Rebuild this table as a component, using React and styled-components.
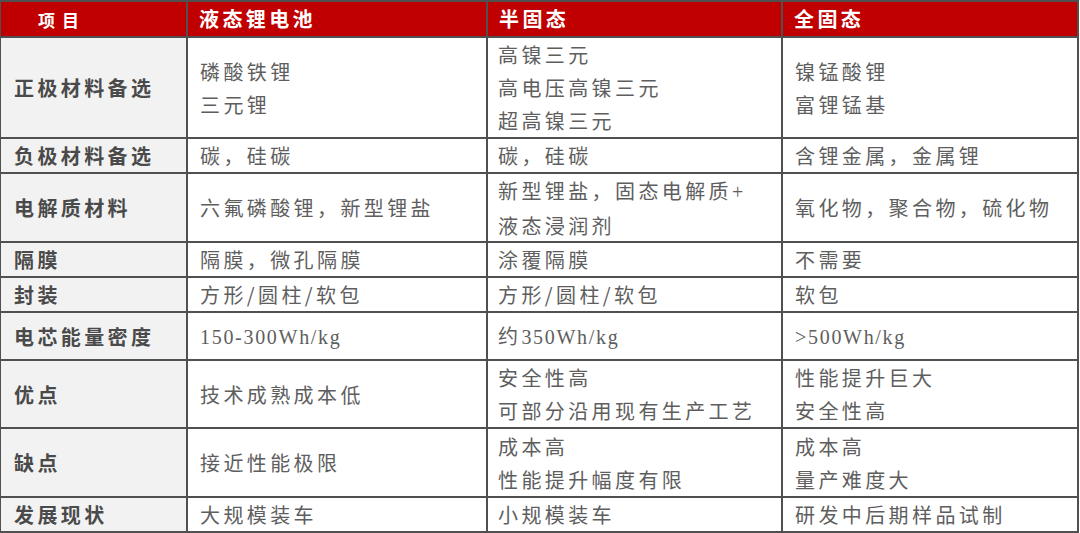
import React from "react";
import styled, { createGlobalStyle } from "styled-components";

const Global = createGlobalStyle`
  html, body { margin: 0; padding: 0; background: #ffffff; }
  body { font-family: "Noto Sans CJK SC", "Noto Sans", sans-serif; }
`;

const Table = styled.div`
  display: grid;
  grid-template-columns: 185px 298px 293px 294px;
  grid-template-rows: 34px 99px 33px 67px 33px 33px 46px 66px 67px 33px;
  gap: 2px;
  padding: 2px 2px 2px 1px;
  background: #505050;
  width: max-content;
`;

const HeadCell = styled.div`
  background: #c00000;
  color: #ffffff;
  display: flex;
  align-items: center;
  padding-left: ${(p) => (p.$first ? "37px" : "11px")};
  font-family: "Noto Sans CJK SC", sans-serif;
  font-weight: 700;
  font-size: ${(p) => (p.$first ? "17px" : "20px")};
  letter-spacing: ${(p) => (p.$first ? "7px" : "3.4px")};
  line-height: 1;
`;

const LabelCell = styled.div`
  background: #f2f2f2;
  color: #4a4a4a;
  display: flex;
  align-items: center;
  padding-left: 13px;
  font-family: "Noto Sans CJK SC", sans-serif;
  font-weight: 700;
  font-size: 20px;
  letter-spacing: 3.4px;
`;

const Cell = styled.div`
  background: #ffffff;
  color: #5e5e5e;
  display: flex;
  flex-direction: column;
  justify-content: center;
  padding-left: ${(p) => p.$pad}px;
  font-family: "Noto Sans CJK SC", sans-serif;
  font-weight: 400;
  font-size: 20px;
  letter-spacing: 3.4px;
`;

const Line = styled.div`
  line-height: 33px;
  white-space: nowrap;
`;

const Latin = styled.span`
  font-family: "Liberation Serif", serif;
  font-size: 20px;
  letter-spacing: 1.7px;
`;

const headers = ["项目", "液态锂电池", "半固态", "全固态"];

const rows = [
  ["正极材料备选", ["磷酸铁锂", "三元锂"], ["高镍三元", "高电压高镍三元", "超高镍三元"], ["镍锰酸锂", "富锂锰基"]],
  ["负极材料备选", ["碳，硅碳"], ["碳，硅碳"], ["含锂金属，金属锂"]],
  ["电解质材料", ["六氟磷酸锂，新型锂盐"], ["新型锂盐，固态电解质+", "液态浸润剂"], ["氧化物，聚合物，硫化物"]],
  ["隔膜", ["隔膜，微孔隔膜"], ["涂覆隔膜"], ["不需要"]],
  ["封装", ["方形/圆柱/软包"], ["方形/圆柱/软包"], ["软包"]],
  ["电芯能量密度", ["150-300Wh/kg"], ["约350Wh/kg"], [">500Wh/kg"]],
  ["优点", ["技术成熟成本低"], ["安全性高", "可部分沿用现有生产工艺"], ["性能提升巨大", "安全性高"]],
  ["缺点", ["接近性能极限"], ["成本高", "性能提升幅度有限"], ["成本高", "量产难度大"]],
  ["发展现状", ["大规模装车"], ["小规模装车"], ["研发中后期样品试制"]],
];

const pads = [12, 10, 12];

function renderText(text) {
  const parts = text.split(/([0-9A-Za-z>+\-][0-9A-Za-z>+\-\/]*)/g);
  return parts.map((part, i) =>
    i % 2 === 1 ? <Latin key={i}>{part}</Latin> : <React.Fragment key={i}>{part}</React.Fragment>
  );
}

export default function App() {
  return (
    <>
      <Global />
      <Table>
        {headers.map((h, i) => (
          <HeadCell key={h} $first={i === 0}>
            {h}
          </HeadCell>
        ))}
        {rows.map(([label, ...cells]) => (
          <React.Fragment key={label}>
            <LabelCell>{label}</LabelCell>
            {cells.map((lines, ci) => (
              <Cell key={ci} $pad={pads[ci]}>
                {lines.map((l) => (
                  <Line key={l}>{renderText(l)}</Line>
                ))}
              </Cell>
            ))}
          </React.Fragment>
        ))}
      </Table>
    </>
  );
}
